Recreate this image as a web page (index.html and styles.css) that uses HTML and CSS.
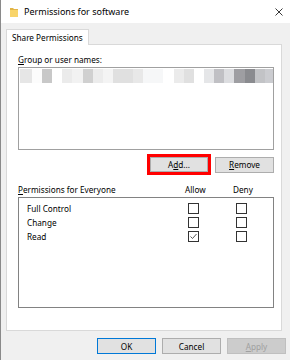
FILE: index.html
```html
<!DOCTYPE html>
<html lang="en">
<head>
  <meta charset="UTF-8">
  <title>Permissions for software</title>
  <link rel="stylesheet" href="styles.css">
</head>
<body>
  <div class="dialog">
    <div class="titlebar">
      <svg class="folder" width="8" height="10" viewBox="0 0 8 10">
        <path d="M0 1h3l1 1h4v8H0z" fill="#e2b547"/>
        <path d="M0 3h8v7H0z" fill="#f8d46a"/>
      </svg>
      <span class="title">Permissions for software</span>
      <svg class="close" width="8" height="8" viewBox="0 0 8 8">
        <path d="M0.5 0.5l7 7M7.5 0.5l-7 7" stroke="#222" stroke-width="0.9"/>
      </svg>
    </div>

    <div class="tabs">
      <div class="tab">Share Permissions</div>
    </div>

    <div class="panel">
      <div class="label"><u>G</u>roup or user names:</div>
      <div class="listbox">
        <div class="redacted"></div>
      </div>

      <div class="list-buttons">
        <span class="highlight"><button class="btn">A<u>d</u>d...</button></span>
        <button class="btn"><u>R</u>emove</button>
      </div>

      <div class="perm-head">
        <span class="name"><u>P</u>ermissions for Everyone</span>
        <span class="col">Allow</span>
        <span class="col">Deny</span>
      </div>
      <div class="perm-list">
        <div class="perm-row">
          <span class="name">Full Control</span>
          <span class="col"><span class="box"></span></span>
          <span class="col"><span class="box"></span></span>
        </div>
        <div class="perm-row">
          <span class="name">Change</span>
          <span class="col"><span class="box"></span></span>
          <span class="col"><span class="box"></span></span>
        </div>
        <div class="perm-row">
          <span class="name">Read</span>
          <span class="col">
            <span class="box">
              <svg width="9" height="9" viewBox="0 0 9 9"><path d="M1.5 4.5l2 2 4-4.5" fill="none" stroke="#555" stroke-width="1"/></svg>
            </span>
          </span>
          <span class="col"><span class="box"></span></span>
        </div>
      </div>
    </div>

    <div class="footer">
      <button class="btn default">OK</button>
      <button class="btn">Cancel</button>
      <button class="btn" disabled><u>A</u>pply</button>
    </div>
  </div>
</body>
</html>
```

FILE: styles.css
```css
body {
  margin: 0;
  background-color: #f0f0f0;
  font-family: "Noto Sans", "Liberation Sans", sans-serif;
  font-size: 8.2px;
  color: #000;
  overflow: hidden;
}
.dialog {
  width: 290px;
  height: 360px;
  box-sizing: border-box;
  border-left: 1px solid #8a8a8a;
}
u {
  text-decoration-thickness: 1px;
  text-underline-offset: 1px;
}

/* title bar */
.titlebar {
  height: 23px;
  background-color: #fff;
  display: flex;
  align-items: center;
  padding: 0 7px 0 9px;
}
.folder {
  margin-right: 6px;
}
.title {
  flex: 1;
  font-size: 9px;
  color: #000;
}

/* tabs */
.tabs {
  display: flex;
  padding: 6px 0 0 5px;
}
.tab {
  height: 15px;
  line-height: 15px;
  padding: 0 5px;
  white-space: nowrap;
  background-color: #fff;
  border: 1px solid #d9d9d9;
  border-bottom: none;
  margin-bottom: -1px;
  position: relative;
  z-index: 1;
}
.panel {
  margin-left: 5px;
  width: 276px;
  background-color: #fff;
  border: 1px solid #d9d9d9;
  padding: 0 7px 22px 11px;
  box-sizing: border-box;
}
.label {
  margin-top: 9px;
  line-height: 12px;
}
.listbox {
  margin-top: 1px;
  height: 83px;
  border: 1px solid #a0a0a0;
  box-sizing: border-box;
  padding: 1px 0 0 1px;
}
.redacted {
  height: 14px;
  background: linear-gradient(to right,
    #e6e6e6 0 12px, #fcfcfc 12px 22px, #c8c8c8 22px 32px, #fff 32px 42px,
    #ebebeb 42px 52px, #f2f2f2 52px 63px, #d0d0d0 63px 73px, #ececec 73px 83px,
    #f4f4f4 83px 93px, #e0e0e0 93px 113px, #e8e8e8 113px 123px, #f6f7f8 123px 143px,
    #fff 143px 154px, #ebebeb 154px 164px, #e0e0e0 164px 174px, #fff 174px 184px,
    #e5e6e8 184px 194px, #c0c0c4 194px 204px, #dcdde0 204px 214px, #9e9ea2 214px 225px,
    #8a8b8f 225px 235px, #c2c3c6 235px 245px, #cbccd0 245px 255px);
}

/* buttons */
.btn {
  font-family: inherit;
  font-size: 8.2px;
  height: 16px;
  padding: 0;
  background-color: #e1e1e1;
  border: 1px solid #adadad;
  color: #000;
  box-sizing: border-box;
}
.btn:disabled {
  background-color: #cccccc;
  border-color: #bfbfbf;
  color: #a0a0a0;
}
.btn.default {
  border-color: #0078d7;
}
.list-buttons {
  margin-top: 4px;
  display: flex;
  align-items: center;
  justify-content: flex-end;
  gap: 4px;
}
.list-buttons .btn {
  width: 59px;
}
.highlight {
  display: flex;
  border: 3px solid #ff0000;
}
.highlight .btn {
  width: 58px;
  height: 15px;
}

/* permissions */
.perm-head {
  margin-top: 9px;
  display: flex;
  line-height: 12px;
  padding-right: 10px;
}
.name {
  flex: 1;
}
.col {
  width: 48px;
  padding-left: 17px;
  box-sizing: border-box;
}
.perm-list {
  margin-top: 1px;
  height: 111px;
  border: 1px solid #828282;
  box-sizing: border-box;
  padding: 3px 9px 0 8px;
}
.perm-row {
  display: flex;
  align-items: center;
  height: 14px;
}
.perm-row .col {
  padding-left: 20px;
}
.box {
  display: flex;
  align-items: center;
  justify-content: center;
  width: 11px;
  height: 11px;
  box-sizing: border-box;
  border: 1px solid #333;
  background-color: #fff;
}

/* footer */
.footer {
  display: flex;
  justify-content: flex-end;
  gap: 6px;
  margin-top: 7px;
  padding-right: 4px;
}
.footer .btn {
  width: 59px;
}
```
